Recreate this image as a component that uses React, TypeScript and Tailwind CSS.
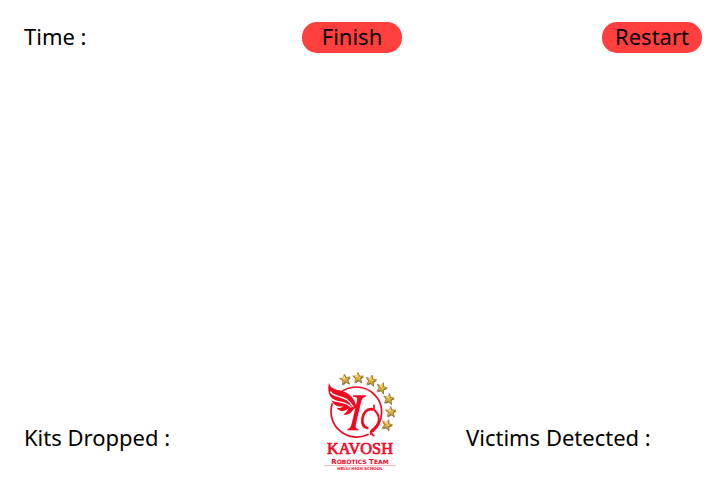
import React from "react";

const STAR =
  "M0 -16 L4 -5 L16 -5 L7 2 L11 15 L0 8 L-10 15 L-7 2 L-16 -5 L-4 -5 Z";

const stars = [
  { x: 105, y: 43, r: -8 },
  { x: 144, y: 38, r: 0 },
  { x: 183, y: 46, r: 12 },
  { x: 215, y: 68, r: 20 },
  { x: 236, y: 101, r: 10 },
  { x: 242, y: 140, r: 0 },
  { x: 231, y: 179, r: 20 },
];

function TeamLogo() {
  return (
    <svg
      viewBox="0 0 300 345"
      role="img"
      aria-label="Kavosh Robotics Team"
      className="block w-full font-['Liberation_Serif',serif]"
    >
      {stars.map((s) => (
        <g key={s.x} transform={`translate(${s.x} ${s.y}) rotate(${s.r})`}>
          <path d={STAR} transform="translate(2 3)" fill="#777166" />
          <path d={STAR} fill="#d9ab35" stroke="#94712a" strokeWidth="2" />
          <path d="M0 -11 L1 0 L-10 -3 Z M1 1 L10 -3 L5 2 Z" fill="#f1d474" />
        </g>
      ))}

      <g fill="none" stroke="#f5061f" strokeWidth="5">
        <path d="M88 85 C103 72 120 66 139 66 C181 66 215 100 215 141 C215 166 204 187 187 201" />
        <path d="M67 115 C57 145 66 177 89 197 C112 218 148 222 176 208" />
      </g>

      <g fill="#f5061f">
        <path d="M57 53 C51 78 57 97 76 106 L88 111 C76 111 69 109 64 106 C71 122 85 127 103 124 C93 129 86 130 80 129 C92 143 107 139 116 130 C112 139 107 144 100 149 C116 150 124 144 129 134 L136 129 L140 129 C134 96 114 82 89 76 C70 72 59 66 57 53 Z" />
        <path d="M130 91 H168 L167 95 C158 97 156 101 154 108 L138 176 C136 186 137 190 146 192 L145 196 H112 L113 192 C121 189 123 184 125 176 L141 108 C143 98 141 96 129 95 Z" />
      </g>

      <g fill="none" stroke="#f5061f" strokeLinecap="round">
        <path d="M187 133 C171 130 158 145 157 162 C156 177 162 187 172 189" strokeWidth="8" />
        <path d="M187 133 C191 133 193 129 192 121" strokeWidth="5" />
        <path d="M192 134 C211 150 211 173 194 188 C185 195 179 200 183 207" strokeWidth="6" />
        <path d="M184 205 L191 212" strokeWidth="5" />
      </g>

      <g fill="none" stroke="#ffffff" strokeWidth="4">
        <path d="M61 80 C73 98 91 91 109 103 C120 111 125 118 130 126" />
        <path d="M67 103 C86 117 104 105 124 127" />
      </g>

      <g fill="#f5061f" textAnchor="middle">
        <text x="150" y="268" stroke="#f5061f" strokeWidth="2" className="text-[49px]">
          KAVOSH
        </text>
        <text x="150" y="297" className="font-['DejaVu_Sans',sans-serif] text-[21px] font-bold">
          R<tspan className="text-[18px]">OBOTICS</tspan>{" T"}
          <tspan className="text-[18px]">EAM</tspan>
        </text>
        <text x="150" y="315" className="font-['DejaVu_Sans',sans-serif] text-[12px] font-bold">
          HELLI HIGH SCHOOL
        </text>
      </g>
      <path d="M42 302 H258" stroke="#ee8e98" strokeWidth="2" />
    </svg>
  );
}

function PillButton({ children }: { children: React.ReactNode }) {
  return (
    <button
      type="button"
      className="flex h-[31px] w-[100px] items-center justify-center rounded-[15px] bg-[#ff3e3e] pb-1"
    >
      {children}
    </button>
  );
}

export default function App() {
  return (
    <div className="flex min-h-screen flex-col justify-between bg-white font-['Noto_Sans','Open_Sans',sans-serif] text-[22px] leading-[30px] text-black">
      <header className="grid grid-cols-[1fr_auto_1fr] items-start pt-[22px] pr-[18px] pl-[2px]">
        <p className="-mt-px pl-[22px]">Time :</p>
        <PillButton>Finish</PillButton>
        <div className="flex justify-end">
          <PillButton>Restart</PillButton>
        </div>
      </header>
      <footer className="grid grid-cols-[1fr_100px_1fr] items-end">
        <p className="pb-7 pl-6 whitespace-nowrap">Kits Dropped :</p>
        <TeamLogo />
        <p className="pb-7 pl-14 whitespace-nowrap">Victims Detected :</p>
      </footer>
    </div>
  );
}
